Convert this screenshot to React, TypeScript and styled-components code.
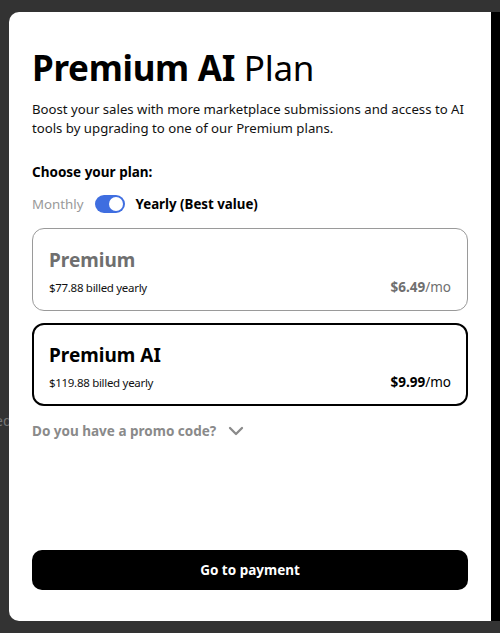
import React, { useState } from 'react';
import styled, { createGlobalStyle } from 'styled-components';

const GlobalStyle = createGlobalStyle`
  html, body {
    margin: 0;
    padding: 0;
    background: #333333;
  }
  body {
    font-family: "Noto Sans", "Open Sans", sans-serif;
    color: #000;
  }
`;

type Plan = {
  id: string;
  name: string;
  billed: string;
  price: string;
};

const PLANS: Plan[] = [
  { id: 'premium', name: 'Premium', billed: '$77.88 billed yearly', price: '$6.49' },
  { id: 'premium-ai', name: 'Premium AI', billed: '$119.88 billed yearly', price: '$9.99' },
];

const App = () => {
  const [yearly, setYearly] = useState(true);
  const [selected, setSelected] = useState('premium-ai');

  return (
    <>
      <GlobalStyle />
      <Backdrop>
        <BehindText>ed</BehindText>
        <Modal>
          <Content>
            <Title>
              <strong>Premium AI</strong> Plan
            </Title>
            <Intro>
              Boost your sales with more marketplace submissions and access to AI
              tools by upgrading to one of our Premium plans.
            </Intro>
            <Label>Choose your plan:</Label>
            <ToggleRow>
              <PeriodText $active={!yearly}>Monthly</PeriodText>
              <Switch type="button" $on={yearly} onClick={() => setYearly(!yearly)}>
                <Knob />
              </Switch>
              <PeriodText $active={yearly}>Yearly (Best value)</PeriodText>
            </ToggleRow>
            <PlanList>
              {PLANS.map((plan) => (
                <PlanCard
                  key={plan.id}
                  $selected={selected === plan.id}
                  onClick={() => setSelected(plan.id)}
                >
                  <PlanName $selected={selected === plan.id}>{plan.name}</PlanName>
                  <PlanFoot>
                    <Billed>{plan.billed}</Billed>
                    <Price $selected={selected === plan.id}>
                      <b>{plan.price}</b>/mo
                    </Price>
                  </PlanFoot>
                </PlanCard>
              ))}
            </PlanList>
            <Promo type="button">
              Do you have a promo code?
              <svg width="16" height="16" viewBox="0 0 16 16" fill="none">
                <path
                  d="M2 5l6 6 6-6"
                  stroke="#8a8a8a"
                  strokeWidth="2.3"
                  strokeLinecap="round"
                  strokeLinejoin="round"
                />
              </svg>
            </Promo>
          </Content>
          <PayButton type="button">Go to payment</PayButton>
        </Modal>
        <Edge />
      </Backdrop>
    </>
  );
};

export default App;

const Backdrop = styled.div`
  position: relative;
  display: flex;
  height: 633px;
  box-sizing: border-box;
  padding: 12px 0 12px 9px;
  overflow: hidden;
`;

const BehindText = styled.span`
  position: absolute;
  left: -5px;
  top: 411px;
  font-size: 14px;
  color: #777;
`;

const Modal = styled.div`
  position: relative;
  flex: 1;
  display: flex;
  flex-direction: column;
  justify-content: space-between;
  background: #fff;
  border-radius: 10px 0 0 10px;
  padding: 36px 23px 31px 23px;
`;

const Edge = styled.div`
  width: 9px;
  background: #000;
`;

const Content = styled.div`
  display: flex;
  flex-direction: column;
`;

const Title = styled.h1`
  margin: 0;
  font-size: 35px;
  line-height: 40px;
  font-weight: 400;
  letter-spacing: -0.3px;
  strong {
    font-weight: 700;
  }
`;

const Intro = styled.p`
  margin: 12px 0 0;
  font-size: 13.2px;
  line-height: 19px;
  color: #111;
`;

const Label = styled.div`
  margin-top: 24px;
  font-size: 13.5px;
  font-weight: 700;
  line-height: 20px;
`;

const ToggleRow = styled.div`
  display: flex;
  align-items: center;
  gap: 11px;
  margin-top: 12px;
  height: 20px;
`;

const PeriodText = styled.span<{ $active: boolean }>`
  font-size: 13.3px;
  font-weight: ${(p) => (p.$active ? 700 : 400)};
  color: ${(p) => (p.$active ? '#000' : '#999')};
`;

const Switch = styled.button<{ $on: boolean }>`
  display: flex;
  align-items: center;
  justify-content: ${(p) => (p.$on ? 'flex-end' : 'flex-start')};
  width: 30px;
  height: 18px;
  padding: 2px;
  border: none;
  border-radius: 9px;
  background: ${(p) => (p.$on ? '#3f6ee0' : '#ccc')};
  box-sizing: border-box;
  cursor: pointer;
`;

const Knob = styled.span`
  width: 14px;
  height: 14px;
  border-radius: 50%;
  background: #fff;
`;

const PlanList = styled.div`
  display: flex;
  flex-direction: column;
  gap: 12px;
  margin-top: 14px;
`;

const PlanCard = styled.div<{ $selected: boolean }>`
  display: flex;
  flex-direction: column;
  height: 83px;
  box-sizing: border-box;
  padding: ${(p) => (p.$selected ? '17px 15px 0 15px' : '18px 16px 0 16px')};
  border: ${(p) => (p.$selected ? '2px solid #000' : '1px solid #9a9a9a')};
  border-radius: 12px;
  cursor: pointer;
`;

const PlanName = styled.div<{ $selected: boolean }>`
  font-size: 19px;
  line-height: 26px;
  font-weight: 700;
  color: ${(p) => (p.$selected ? '#000' : '#6f6f6f')};
`;

const PlanFoot = styled.div`
  display: flex;
  justify-content: space-between;
  align-items: baseline;
  margin-top: 5px;
`;

const Billed = styled.span`
  font-size: 11.5px;
  letter-spacing: -0.3px;
  color: #111;
`;

const Price = styled.span<{ $selected: boolean }>`
  font-size: 13.5px;
  color: ${(p) => (p.$selected ? '#000' : '#6f6f6f')};
  b {
    font-weight: 700;
  }
`;

const Promo = styled.button`
  display: flex;
  align-items: center;
  gap: 12px;
  align-self: flex-start;
  margin-top: 16px;
  padding: 0;
  border: none;
  background: none;
  font-family: inherit;
  font-size: 13.5px;
  font-weight: 700;
  color: #8a8a8a;
  cursor: pointer;
`;

const PayButton = styled.button`
  height: 40px;
  width: 100%;
  border: none;
  border-radius: 10px;
  background: #000;
  color: #fff;
  font-family: inherit;
  font-size: 13.5px;
  font-weight: 700;
  cursor: pointer;
`;
